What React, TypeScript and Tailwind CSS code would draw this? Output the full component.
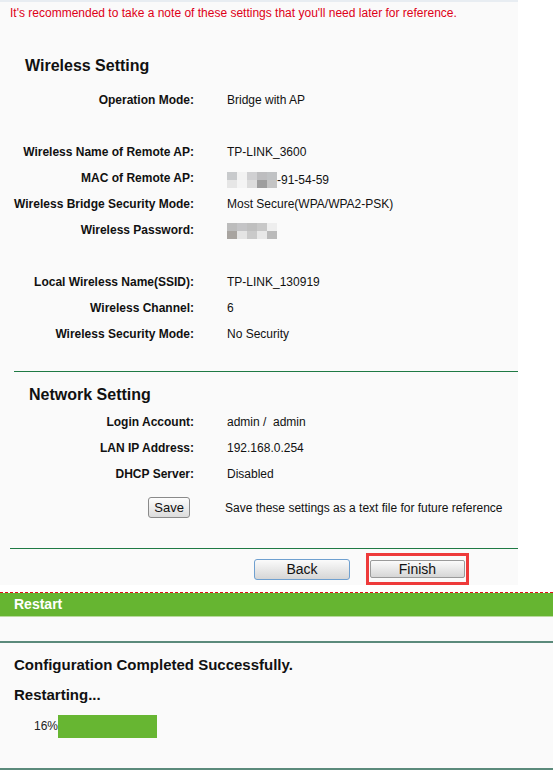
import React from 'react';

type Row = { label: string; value?: React.ReactNode; blank?: boolean };

const Blur: React.FC<{ cells: string[] }> = ({ cells }) => (
  <span className="inline-flex flex-wrap w-[50px] h-[16px] align-middle">
    {cells.map((c, i) => (
      <span key={i} className="w-[10px] h-[8px]" style={{ backgroundColor: c }} />
    ))}
  </span>
);

const wirelessRows: Row[] = [
  { label: 'Operation Mode:', value: 'Bridge with AP' },
  { label: '', blank: true },
  { label: 'Wireless Name of Remote AP:', value: 'TP-LINK_3600' },
  {
    label: 'MAC of Remote AP:',
    value: (
      <span className="inline-flex items-center">
        <Blur cells={['#c8cacc', '#f2f2f2', '#d0d0d2', '#bdbdbf', '#c0c2c4', '#e6e6e6', '#f4f4f4', '#dcdcdc', '#9e9e9e', '#c4c4c4']} />
        <span>-91-54-59</span>
      </span>
    ),
  },
  { label: 'Wireless Bridge Security Mode:', value: 'Most Secure(WPA/WPA2-PSK)' },
  {
    label: 'Wireless Password:',
    value: <Blur cells={['#bcbcbc', '#c4c4c6', '#bfbfbf', '#c8c8c8', '#eeeeee', '#a8a4a0', '#e4e4e4', '#cacaca', '#e8e8e8', '#bababa']} />,
  },
  { label: '', blank: true },
  { label: 'Local Wireless Name(SSID):', value: 'TP-LINK_130919' },
  { label: 'Wireless Channel:', value: '6' },
  { label: 'Wireless Security Mode:', value: 'No Security' },
];

const networkRows: Row[] = [
  { label: 'Login Account:', value: 'admin /\u00a0 admin' },
  { label: 'LAN IP Address:', value: '192.168.0.254' },
  { label: 'DHCP Server:', value: 'Disabled' },
];

const InfoRows: React.FC<{ rows: Row[] }> = ({ rows }) => (
  <div className="flex flex-col">
    {rows.map((r, i) => (
      <div key={i} className="flex h-[26px] items-center">
        <div className="w-[194px] text-right font-bold text-[12px] text-[#111]">{r.label}</div>
        <div className="pl-[33px] text-[12px] text-[#111]">{r.value}</div>
      </div>
    ))}
  </div>
);

export default function App() {
  return (
    <div className="w-[553px] h-[775px] bg-white overflow-hidden font-['Liberation_Sans',Arial,sans-serif]">
      {/* settings summary panel */}
      <div className="w-[518px] h-[585px] bg-[#fafafa] border-t-2 border-[#e8edf2] flex flex-col">
        <div className="pl-[10px] pt-[2px] h-[22px] text-[12px] text-[#de0018]">
          It's recommended to take a note of these settings that you'll need later for reference.
        </div>
        <div className="pl-[25px] pt-[34px] h-[71px] text-[16px] font-bold text-[#111] leading-[20px]">
          Wireless Setting
        </div>
        <InfoRows rows={wirelessRows} />
        <div className="mt-[24px] ml-[14px] border-t border-[#1f7a44]" />
        <div className="pl-[29px] pt-[13px] h-[42px] text-[16px] font-bold text-[#111] leading-[20px]">
          Network Setting
        </div>
        <InfoRows rows={networkRows} />
        <div className="flex items-center h-[32px] mt-[7px]">
          <div className="w-[190px] flex justify-end">
            <button className="h-[21px] px-[5px] border border-[#8a8a8a] rounded-[3px] bg-gradient-to-b from-[#fdfdfd] to-[#dcdcdc] text-[13px] text-[#111] leading-none">
              Save
            </button>
          </div>
          <div className="pl-[35px] text-[12px] text-[#111]">Save these settings as a text file for future reference</div>
        </div>
        <div className="mt-[27px] ml-[10px] border-t border-[#1f7a44]" />
        <div className="flex items-center pt-[4px]">
          <button className="ml-[254px] w-[96px] h-[21px] border border-[#6fa0d0] rounded-[3px] bg-gradient-to-b from-[#fbfbfb] to-[#d6d6d6] text-[14px] text-[#111] leading-none">
            Back
          </button>
          <div className="ml-[16px] border-[3px] border-[#ee3a3a] p-[1px]">
            <button className="w-[95px] h-[18px] border border-[#9a9a9a] rounded-[2px] bg-gradient-to-b from-[#fbfbfb] to-[#d6d6d6] text-[14px] text-[#111] leading-none">
              Finish
            </button>
          </div>
        </div>
      </div>

      {/* restart panel */}
      <div className="mt-[7px] border-t border-dashed border-[#e0101a]">
        <div className="h-[23px] bg-[#66b531] pl-[14px] flex items-center text-[14px] font-bold text-white">Restart</div>
        <div className="h-[25px] bg-[#fafafa] border-t border-[#b9d99e]" />
        <div className="bg-[#fafafa] border-t-2 border-[#5b8a7b] h-[127px] flex flex-col">
          <div className="pl-[14px] pt-[12px] h-[38px] text-[15px] font-bold text-[#111] leading-[20px]">
            Configuration Completed Successfully.
          </div>
          <div className="pl-[14px] pt-[4px] h-[33px] text-[15px] font-bold text-[#111] leading-[20px]">
            Restarting...
          </div>
          <div className="flex items-center pl-[34px] h-[24px]">
            <span className="text-[12px] text-[#222]">16%</span>
            <div className="w-[99px] h-[23px] bg-[#67b632]" />
          </div>
        </div>
        <div className="border-t-2 border-[#5b8a7b]" />
      </div>
    </div>
  );
}
